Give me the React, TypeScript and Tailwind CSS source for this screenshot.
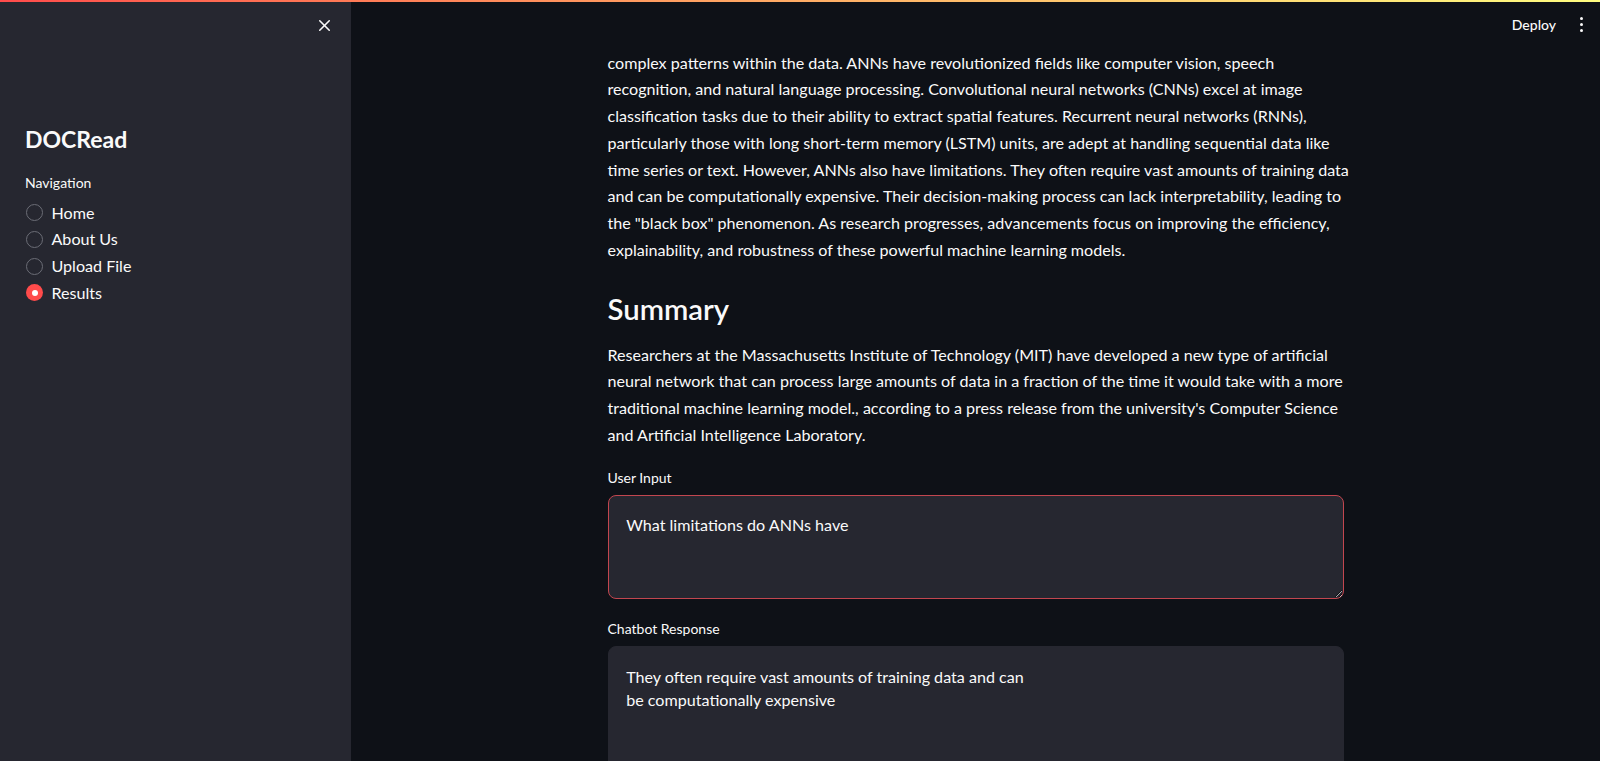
import { X } from "lucide-react";

const font = "font-['Lato','Liberation_Sans',sans-serif]";

const intro = [
  "complex patterns within the data. ANNs have revolutionized fields like computer vision, speech",
  "recognition, and natural language processing. Convolutional neural networks (CNNs) excel at image",
  "classification tasks due to their ability to extract spatial features. Recurrent neural networks (RNNs),",
  "particularly those with long short-term memory (LSTM) units, are adept at handling sequential data like",
  "time series or text. However, ANNs also have limitations. They often require vast amounts of training data",
  "and can be computationally expensive. Their decision-making process can lack interpretability, leading to",
  'the "black box" phenomenon. As research progresses, advancements focus on improving the efficiency,',
  "explainability, and robustness of these powerful machine learning models.",
];

const summary = [
  "Researchers at the Massachusetts Institute of Technology (MIT) have developed a new type of artificial",
  "neural network that can process large amounts of data in a fraction of the time it would take with a more",
  "traditional machine learning model., according to a press release from the university's Computer Science",
  "and Artificial Intelligence Laboratory.",
];

const pages = ["Home", "About Us", "Upload File", "Results"];

function Lines({ lines }: { lines: string[] }) {
  return (
    <p className="text-[16.1px] leading-[26.7px] text-[#fafafa]">
      {lines.map((l, i) => (
        <span key={i} className="block whitespace-nowrap">
          {l}
        </span>
      ))}
    </p>
  );
}

function Radio({ label, checked }: { label: string; checked?: boolean }) {
  return (
    <label className="flex h-[26.6px] items-center gap-[8.5px]">
      {checked ? (
        <span className="flex h-[17px] w-[17px] items-center justify-center rounded-full bg-[#ff4b4b]">
          <span className="h-[6px] w-[6px] rounded-full bg-white" />
        </span>
      ) : (
        <span className="h-[17px] w-[17px] rounded-full border border-[#6b6d76]" />
      )}
      <span className="text-[16.1px] text-[#fafafa]">{label}</span>
    </label>
  );
}

export default function App() {
  return (
    <div className={`relative flex h-screen w-full overflow-hidden bg-[#0e1117] ${font}`}>
      {/* streamlit decoration line */}
      <div className="absolute inset-x-0 top-0 z-10 h-[2px] bg-gradient-to-r from-[#ff4b4b] to-[#fffd80]" />

      {/* Sidebar */}
      <aside className="w-[351px] shrink-0 bg-[#262730] pl-[25px]">
        <div className="flex h-[51px] items-center justify-end pr-[17px]">
          <X size={19} strokeWidth={2} className="text-[#fafafa]" />
        </div>
        <h1 className="mt-[73px] text-[23px] font-bold leading-[30px] text-[#fafafa]">DOCRead</h1>
        <div className="mt-[18.6px] text-[14px] leading-[20px] text-[#fafafa]">Navigation</div>
        <div className="mt-[7px] flex flex-col pl-[1px]">
          {pages.map((p) => (
            <Radio key={p} label={p} checked={p === "Results"} />
          ))}
        </div>
      </aside>

      {/* Main */}
      <main className="flex flex-1 flex-col">
        <header className="flex h-[48px] shrink-0 items-center justify-end gap-[24px] pr-[17px]">
          <span className="text-[14px] font-medium text-[#fafafa]">Deploy</span>
          <span className="flex flex-col gap-[3px]">
            <span className="h-[3px] w-[3px] rounded-full bg-[#fafafa]" />
            <span className="h-[3px] w-[3px] rounded-full bg-[#fafafa]" />
            <span className="h-[3px] w-[3px] rounded-full bg-[#fafafa]" />
          </span>
        </header>

        <div className="flex justify-center">
          <div className="w-[736px] pt-[1.7px]">
            <Lines lines={intro} />

            <h3 className="mt-[27.2px] text-[29.3px] font-semibold leading-[35px] text-[#fafafa]">Summary</h3>
            <div className="mt-[16.2px]">
              <Lines lines={summary} />
            </div>

            <div className="mt-[19px] text-[14px] leading-[20px] text-[#fafafa]">User Input</div>
            <textarea
              className={`mt-[7.5px] block h-[104px] w-full resize-y rounded-[8px] border border-[#c2464f] bg-[#262730] px-[17.7px] py-[16.7px] text-[16.1px] leading-[23.4px] text-[#fafafa] outline-none ${font}`}
              defaultValue="What limitations do ANNs have"
            />

            <div className="mt-[19.6px] text-[14px] leading-[20px] text-[#fafafa]">Chatbot Response</div>
            <textarea
              className={`mt-[7.4px] block h-[160px] w-full resize-none rounded-[8px] border border-[#262730] bg-[#262730] px-[17.7px] py-[17.7px] text-[16.1px] leading-[23.4px] text-[#fafafa] outline-none ${font}`}
              readOnly
              defaultValue={"They often require vast amounts of training data and can\nbe computationally expensive"}
            />
          </div>
        </div>
      </main>
    </div>
  );
}
